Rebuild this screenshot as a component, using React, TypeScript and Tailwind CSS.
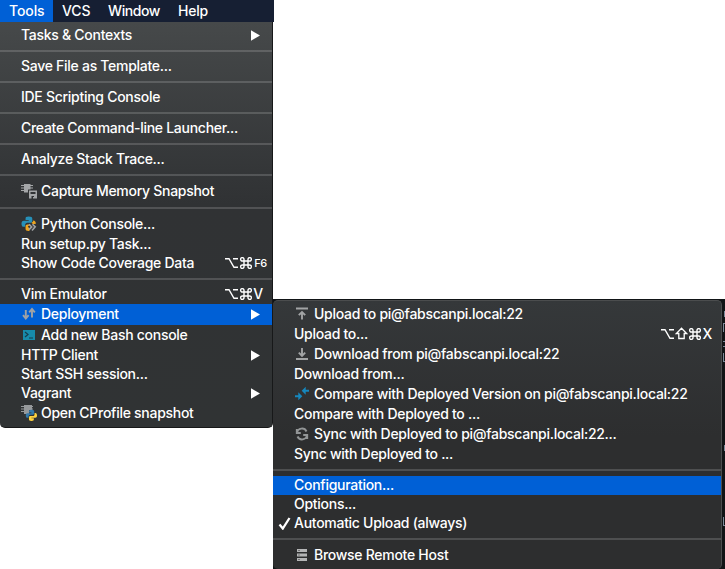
import React from "react";

type IconName = "memory" | "python" | "deploy" | "bash" | "profile" | "upload" | "download" | "compare" | "sync" | "host";
type Entry = {
  label?: string;
  icon?: IconName;
  arrow?: boolean;
  keys?: React.ReactNode;
  active?: boolean;
  checked?: boolean;
};

function Snake() {
  return (
    <>
      <path d="M8 0C5 0 4.5 1 4.5 2.5V4H8v.8H2.5C.8 4.800 0 6 0 8s.8 3.500 2.300 3.500H4V9.700C4 8 5 7 6.500 7H10c1.200 0 2-.8 2-2V2.500C12 1 11 0 8 0Z" fill="#3279ab" />
      <path d="M8 16c3 0 3.500-1 3.500-2.500V12H8v-.8h5.500C15.200 11.200 16 10 16 8s-.8-3.500-2.300-3.500H12.500v1.800C12.500 8 11.500 9 10 9H6.500c-1.200 0-2 .8-2 2v2.500C4.500 15 5.500 16 8 16Z" fill="#ffd33f" />
    </>
  );
}

function Icon({ name }: { name: IconName }) {
  return (
    <svg className="block h-4 w-4 shrink-0 overflow-visible" viewBox="0 0 16 16" fill="none">
      {name === "memory" && (
        <g fill="#a4a6a8">
          <path d="M3 1h6.500v5.500H7v3H3z" />
          <path d="M0 2h12v1H0zM0 4.500h12v1H0zM0 7h7v1H0z" />
          <path fillRule="evenodd" d="M8 7.500h8V15.500H8zM9.500 9v2h5V9zM10.500 13v2.500h1.500V14h1v-1z" />
        </g>
      )}
      {name === "python" && (
        <>
          <g transform="translate(0.500 .5) scale(.9)">
            <path d="M8 0C5 0 4.500 1 4.500 2.500V4H8v.8H2.500C.8 4.800 0 6 0 8s.8 3.500 2.300 3.500H4V9.700C4 8 5 7 6.500 7H10c1.200 0 2-.8 2-2V2.500C12 1 11 0 8 0Z" fill="#2690b8" />
            <path d="M8 16c1.500 0 1-1.500 1-2.500L7 11l3-2H6.500c-1.200 0-2 .8-2 2v2.500C4.500 15 5.500 16 8 16ZM13 4.500c2 0 3 1.500 3 3.500l-3 .5L11 7c1.500-.5 2-1.500 2-2.500Z" fill="#eda51f" />
          </g>
          <path d="m8 8.200 2.700 2.700L8 13.600M11.500 8.200l2.700 2.700-3.200 3.600" stroke="#a0a2a4" strokeWidth="1.600" />
        </>
      )}
      {name === "deploy" && (
        <path d="M4.800 4v8M2 9.200l2.800 3.300 2.800-3.300M11 11.500V3.500M8.200 6.300 11 3l2.800 3.300" stroke="#a0a2a5" strokeWidth="1.900" />
      )}
      {name === "bash" && (
        <>
          <path d="M2 3h12v10H2z" fill="#178bab" />
          <path d="m4 5 3 2.500L4 10M8 11h4" stroke="#173d4b" strokeWidth="1.200" />
        </>
      )}
      {name === "profile" && (
        <>
          <path d="M3 0h8v5H8v4H3zM0 1h12v1H0zM0 3.500h12v1H0zM0 6h8v1H0z" fill="#96999b" />
          <g transform="translate(4.800 4.800) scale(.7)"><Snake /></g>
        </>
      )}
      {name === "upload" && <path d="M2 2.500h12M8 13.500V6M4.800 9.200 8 6l3.200 3.200" stroke="#a2a4a5" strokeWidth="1.900" />}
      {name === "download" && <path d="M2 13h12M8 2v7.500M4.800 6.600 8 9.800l3.200-3.200" stroke="#a2a4a5" strokeWidth="1.900" />}
      {name === "compare" && (
        <g fill="#1687bd">
          <path d="M7.700 4.700 11.700.7v3H15v2h-3.300v3zM8.300 10.300 4.300 6.300v3H1v2h3.300v3z" />
        </g>
      )}
      {name === "sync" && (
        <path d="M3 7a5 5 0 0 1 9.500-1.500M13 9a5 5 0 0 1-9.500 1.500M2.800 3v4h4M13.200 13V9h-4" stroke="#929596" strokeWidth="1.900" />
      )}
      {name === "host" && (
        <>
          <path d="M3 2h10v3H3zM3 6.500h10v3H3zM3 11h10v3H3z" fill="#b4b5b6" />
          <path d="M4.500 3h1v1h-1zM4.500 7.500h1v1h-1zM4.500 12h1v1h-1z" fill="#333" />
        </>
      )}
    </svg>
  );
}

function Option() {
  return <svg className="mb-0.5 h-[12px] w-[13px]" viewBox="0 0 13 12" fill="none"><path d="M0 1.700h4l5 8.600h4M8 1.700h5" stroke="white" strokeWidth="1.400" /></svg>;
}
function Command() {
  return <svg className="mb-0.5 h-[12px] w-[12px]" viewBox="0 0 12 12" fill="none"><path d="M4 4V2.500A1.700 1.700 0 1 0 2.500 4h7A1.700 1.700 0 1 0 8 2.500v7A1.700 1.700 0 1 0 9.500 8h-7A1.700 1.700 0 1 0 4 9.500V4" stroke="white" strokeWidth="1.400" /></svg>;
}
function Shift() {
  return <svg className="mb-0.5 h-[13px] w-[13px]" viewBox="0 0 13 13" fill="none"><path d="M6.500 1.200 1.300 6.500h2.500v5h5.400v-5h2.500z" stroke="white" strokeWidth="1.300" /></svg>;
}

function Menu({ entries }: { entries: Entry[] }) {
  return (
    <>
      {entries.map((e, i) =>
        !e.label ? (
          <div key={i} className="flex h-3 items-center"><div className="h-0.5 w-full bg-white/16" /></div>
        ) : (
          <div key={i} className={`flex items-center whitespace-nowrap ${e.icon ? "h-[21px]" : "h-[19px]"} ${e.active ? "bg-[#0060d6]" : ""}`}>
            <div className="flex w-[21px] shrink-0 justify-end pr-[3px]">
              {e.checked && <svg className="h-[13px] w-[13px]" viewBox="0 0 13 13" fill="none"><path d="m1.500 7.500 3.300 4L11.500 1" stroke="white" strokeWidth="2.300" /></svg>}
            </div>
            {e.icon && <div className="mr-1 mb-px"><Icon name={e.icon} /></div>}
            <span className="pb-0.5">{e.label}</span>
            {e.keys && <div className="ml-auto flex items-center">{e.keys}</div>}
            {e.arrow && <svg className="mr-3 ml-auto h-[11px] w-[9px]" viewBox="0 0 9 11"><path d="M0 .2v10.600l9-5.300z" fill="white" /></svg>}
          </div>
        )
      )}
    </>
  );
}

const tools: Entry[] = [
  { label: "Tasks & Contexts", arrow: true }, {},
  { label: "Save File as Template..." }, {},
  { label: "IDE Scripting Console" }, {},
  { label: "Create Command-line Launcher..." }, {},
  { label: "Analyze Stack Trace..." }, {},
  { label: "Capture Memory Snapshot", icon: "memory" }, {},
  { label: "Python Console...", icon: "python" },
  { label: "Run setup.py Task..." },
  { label: "Show Code Coverage Data", keys: <div className="mr-[5px] flex items-center gap-0.5"><Option /><Command /><span className="text-[11px]">F6</span></div> }, {},
  { label: "Vim Emulator", keys: <div className="mr-[9px] flex items-center gap-0.5"><Option /><Command /><span className="-ml-px pb-0.5">V</span></div> },
  { label: "Deployment", icon: "deploy", arrow: true, active: true },
  { label: "Add new Bash console", icon: "bash" },
  { label: "HTTP Client", arrow: true },
  { label: "Start SSH session..." },
  { label: "Vagrant", arrow: true },
  { label: "Open CProfile snapshot", icon: "profile" },
];

const deployment: Entry[] = [
  { label: "Upload to pi@fabscanpi.local:22", icon: "upload" },
  { label: "Upload to...", keys: <div className="mr-[9px] flex items-center gap-px"><Option /><Shift /><Command /><span className="pb-0.5">X</span></div> },
  { label: "Download from pi@fabscanpi.local:22", icon: "download" },
  { label: "Download from..." },
  { label: "Compare with Deployed Version on pi@fabscanpi.local:22", icon: "compare" },
  { label: "Compare with Deployed to ..." },
  { label: "Sync with Deployed to pi@fabscanpi.local:22...", icon: "sync" },
  { label: "Sync with Deployed to ..." }, {},
  { label: "Configuration...", active: true },
  { label: "Options..." },
  { label: "Automatic Upload (always)", checked: true }, {},
  { label: "Browse Remote Host", icon: "host" },
];

export default function App() {
  return (
    <div className="flex h-[569px] w-[725px] overflow-hidden bg-white font-['Inter',sans-serif] text-[14px] leading-[19px] font-medium tracking-[-0.28px] text-white">
      <div className="w-[273px] shrink-0">
        <div className="flex h-[22px] w-[274px] items-center bg-[#161f33]">
          <div className="flex h-[22px] w-[53px] items-center bg-[#0060d6] pb-0.5 pl-[9px] tracking-[-0.1px]">Tools</div>
          <div className="w-[46px] pb-0.5 pl-[9px] tracking-[-0.15px]">VCS</div>
          <div className="w-[70px] pb-0.5 pl-[9px] tracking-[-0.4px]">Window</div>
          <div className="pb-0.5 pl-[9px] tracking-[-0.2px]">Help</div>
        </div>
        <div className="h-[406px] rounded-b-[5px] border-r border-b border-[#171819] bg-linear-to-b from-[#46494a] via-[#303234] via-45% to-[#303334] pt-1">
          <Menu entries={tools} />
        </div>
      </div>
      <div className="mt-[299px] flex h-[270px] w-[452px] bg-[#111416]">
        <div className="mt-px h-[269px] w-[449px] shrink-0 rounded-[5px] border-t border-r border-[#4b4d4e] bg-linear-to-b from-[#35383a] to-[#2d2e2f] to-50% pt-[3px]">
          <Menu entries={deployment} />
        </div>
        {/* Edges of the editor text behind the menu */}
        <div className="flex w-[3px] flex-col items-end pt-3">
          <div className="h-[6px] w-px bg-[#7c8a99]" />
          <div className="mt-[6px] h-[9px] w-[2px] border-t border-l border-[#7c8a99]" />
          <div className="mt-[9px] h-[6px] w-[2px] border-y border-[#7c8a99]" />
          <div className="mt-[6px] h-[9px] w-[2px] border-b border-l border-[#7c8a99]" />
          <div className="mt-[83px] h-[6px] w-px bg-[#7c8a99]" />
          <div className="mt-[66px] h-[9px] w-[2px] border-b border-l border-[#7c8a99]" />
        </div>
      </div>
    </div>
  );
}
